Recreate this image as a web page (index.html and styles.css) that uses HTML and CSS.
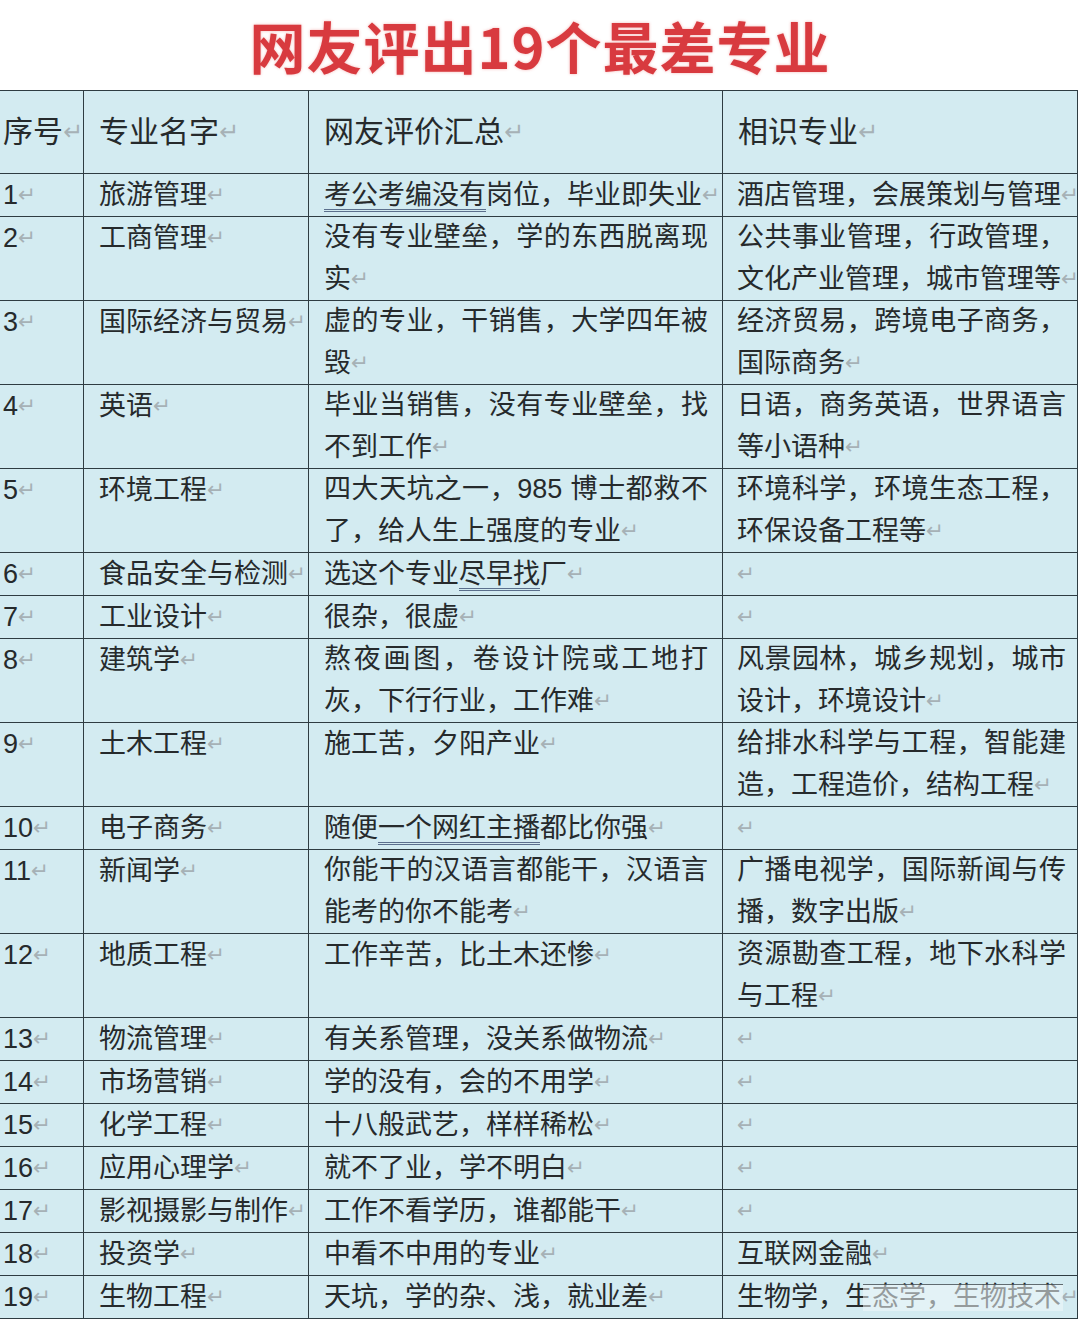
FILE: index.html
```html
<!DOCTYPE html>
<html lang="zh-CN">
<head>
<meta charset="utf-8">
<title>网友评出19个最差专业</title>
<link rel="stylesheet" href="styles.css">
</head>
<body>
<div class="page">
  <h1 class="title">网友评出19个最差专业</h1>
  <table class="grid">
    <colgroup>
      <col class="c-no"><col class="c-name"><col class="c-review"><col class="c-related">
    </colgroup>
    <thead>
      <tr>
        <th class="no">序号<span class="ret">↵</span></th>
        <th>专业名字<span class="ret">↵</span></th>
        <th>网友评价汇总<span class="ret">↵</span></th>
        <th>相识专业<span class="ret">↵</span></th>
      </tr>
    </thead>
    <tbody>
      <tr><td class="no">1<span class="ret">↵</span></td><td class="name">旅游管理<span class="ret">↵</span></td><td><span class="mark">考公考编没有</span>岗位，毕业即失业<span class="ret">↵</span></td><td class="rel">酒店管理，会展策划与管理<span class="ret">↵</span></td></tr>
      <tr><td class="no">2<span class="ret">↵</span></td><td class="name">工商管理<span class="ret">↵</span></td><td>没有专业壁垒，学的东西脱离现实<span class="ret">↵</span></td><td class="rel">公共事业管理，行政管理，文化产业管理，城市管理等<span class="ret">↵</span></td></tr>
      <tr><td class="no">3<span class="ret">↵</span></td><td class="name">国际经济与贸易<span class="ret">↵</span></td><td>虚的专业，干销售，大学四年被毁<span class="ret">↵</span></td><td class="rel">经济贸易，跨境电子商务，国际商务<span class="ret">↵</span></td></tr>
      <tr><td class="no">4<span class="ret">↵</span></td><td class="name">英语<span class="ret">↵</span></td><td>毕业当销售，没有专业壁垒，找不到工作<span class="ret">↵</span></td><td class="rel">日语，商务英语，世界语言等小语种<span class="ret">↵</span></td></tr>
      <tr><td class="no">5<span class="ret">↵</span></td><td class="name">环境工程<span class="ret">↵</span></td><td>四大天坑之一，985 博士都救不了，给人生上强度的专业<span class="ret">↵</span></td><td class="rel">环境科学，环境生态工程，环保设备工程等<span class="ret">↵</span></td></tr>
      <tr><td class="no">6<span class="ret">↵</span></td><td class="name">食品安全与检测<span class="ret">↵</span></td><td>选这个专业<span class="mark">尽早找</span>厂<span class="ret">↵</span></td><td class="rel"><span class="ret">↵</span></td></tr>
      <tr><td class="no">7<span class="ret">↵</span></td><td class="name">工业设计<span class="ret">↵</span></td><td>很杂，很虚<span class="ret">↵</span></td><td class="rel"><span class="ret">↵</span></td></tr>
      <tr><td class="no">8<span class="ret">↵</span></td><td class="name">建筑学<span class="ret">↵</span></td><td>熬夜画图，卷设计院或工地打灰，下行行业，工作难<span class="ret">↵</span></td><td class="rel">风景园林，城乡规划，城市设计，环境设计<span class="ret">↵</span></td></tr>
      <tr><td class="no">9<span class="ret">↵</span></td><td class="name">土木工程<span class="ret">↵</span></td><td>施工苦，夕阳产业<span class="ret">↵</span></td><td class="rel">给排水科学与工程，智能建造，工程造价，结构工程<span class="ret">↵</span></td></tr>
      <tr><td class="no">10<span class="ret">↵</span></td><td class="name">电子商务<span class="ret">↵</span></td><td>随便<span class="mark">一个网红主播</span>都比你强<span class="ret">↵</span></td><td class="rel"><span class="ret">↵</span></td></tr>
      <tr><td class="no">11<span class="ret">↵</span></td><td class="name">新闻学<span class="ret">↵</span></td><td>你能干的汉语言都能干，汉语言能考的你不能考<span class="ret">↵</span></td><td class="rel">广播电视学，国际新闻与传播，数字出版<span class="ret">↵</span></td></tr>
      <tr><td class="no">12<span class="ret">↵</span></td><td class="name">地质工程<span class="ret">↵</span></td><td>工作辛苦，比土木还惨<span class="ret">↵</span></td><td class="rel">资源勘查工程，地下水科学与工程<span class="ret">↵</span></td></tr>
      <tr><td class="no">13<span class="ret">↵</span></td><td class="name">物流管理<span class="ret">↵</span></td><td>有关系管理，没关系做物流<span class="ret">↵</span></td><td class="rel"><span class="ret">↵</span></td></tr>
      <tr><td class="no">14<span class="ret">↵</span></td><td class="name">市场营销<span class="ret">↵</span></td><td>学的没有，会的不用学<span class="ret">↵</span></td><td class="rel"><span class="ret">↵</span></td></tr>
      <tr><td class="no">15<span class="ret">↵</span></td><td class="name">化学工程<span class="ret">↵</span></td><td>十八般武艺，样样稀松<span class="ret">↵</span></td><td class="rel"><span class="ret">↵</span></td></tr>
      <tr><td class="no">16<span class="ret">↵</span></td><td class="name">应用心理学<span class="ret">↵</span></td><td>就不了业，学不明白<span class="ret">↵</span></td><td class="rel"><span class="ret">↵</span></td></tr>
      <tr><td class="no">17<span class="ret">↵</span></td><td class="name">影视摄影与制作<span class="ret">↵</span></td><td>工作不看学历，谁都能干<span class="ret">↵</span></td><td class="rel"><span class="ret">↵</span></td></tr>
      <tr><td class="no">18<span class="ret">↵</span></td><td class="name">投资学<span class="ret">↵</span></td><td>中看不中用的专业<span class="ret">↵</span></td><td class="rel">互联网金融<span class="ret">↵</span></td></tr>
      <tr><td class="no">19<span class="ret">↵</span></td><td class="name">生物工程<span class="ret">↵</span></td><td>天坑，学的杂、浅，就业差<span class="ret">↵</span></td><td class="rel wm-cell">生物学，生态学，生物技术<span class="ret">↵</span><span class="watermark"></span></td></tr>
    </tbody>
  </table>
</div>
</body>
</html>
```
FILE: styles.css
```css
html, body {
  margin: 0;
  padding: 0;
  background: #ffffff;
}

.page {
  width: 1080px;
  overflow: hidden;
}

.title {
  margin: 0;
  height: 90px;
  line-height: 90px;
  text-align: center;
  font-family: "Noto Sans CJK SC", "Liberation Sans", sans-serif;
  font-weight: 700;
  font-size: 56px;
  letter-spacing: 1px;
  color: #d83a3f;
  text-shadow: 0 0 3px rgba(230, 90, 90, 0.45);
}

.grid {
  table-layout: fixed;
  border-collapse: collapse;
  width: 1078px;
  margin-left: -1px;
  background: #d3ebf1;
  font-family: "Liberation Sans", "Noto Sans CJK SC", sans-serif;
  color: #262a2c;
}

.c-no { width: 84px; }
.c-name { width: 225px; }
.c-review { width: 414px; }
.c-related { width: 355px; }

.grid th,
.grid td {
  border: 1.5px solid #2e3c42;
  overflow: hidden;
  text-align: justify;
}

.grid th {
  height: 82px;
  padding: 0 15px;
  vertical-align: middle;
  font-weight: 400;
  font-size: 30px;
  line-height: 40px;
  white-space: nowrap;
}

.grid td {
  padding: 0 14px 0.3px 15px;
  vertical-align: top;
  font-size: 27px;
  line-height: 41px;
}

.grid td.rel {
  padding-left: 14px;
  padding-right: 11px;
}

.grid th.no,
.grid td.no {
  padding-left: 3px;
  padding-right: 0;
}

.grid td.name {
  white-space: nowrap;
}

.ret {
  display: inline-block;
  width: 0;
  white-space: nowrap;
  font-family: "DejaVu Sans", sans-serif;
  font-size: 0.8em;
  color: #a6b1b6;
  vertical-align: 0.08em;
}

.mark {
  text-decoration: underline double #5b6f8c;
  text-decoration-thickness: 1px;
  text-underline-offset: 5px;
}

.wm-cell {
  position: relative;
}

.watermark {
  position: absolute;
  left: 140px;
  top: 8px;
  width: 200px;
  height: 26px;
  background: rgba(240, 248, 250, 0.55);
  border-top: 1px solid rgba(40, 50, 55, 0.7);
}
```
